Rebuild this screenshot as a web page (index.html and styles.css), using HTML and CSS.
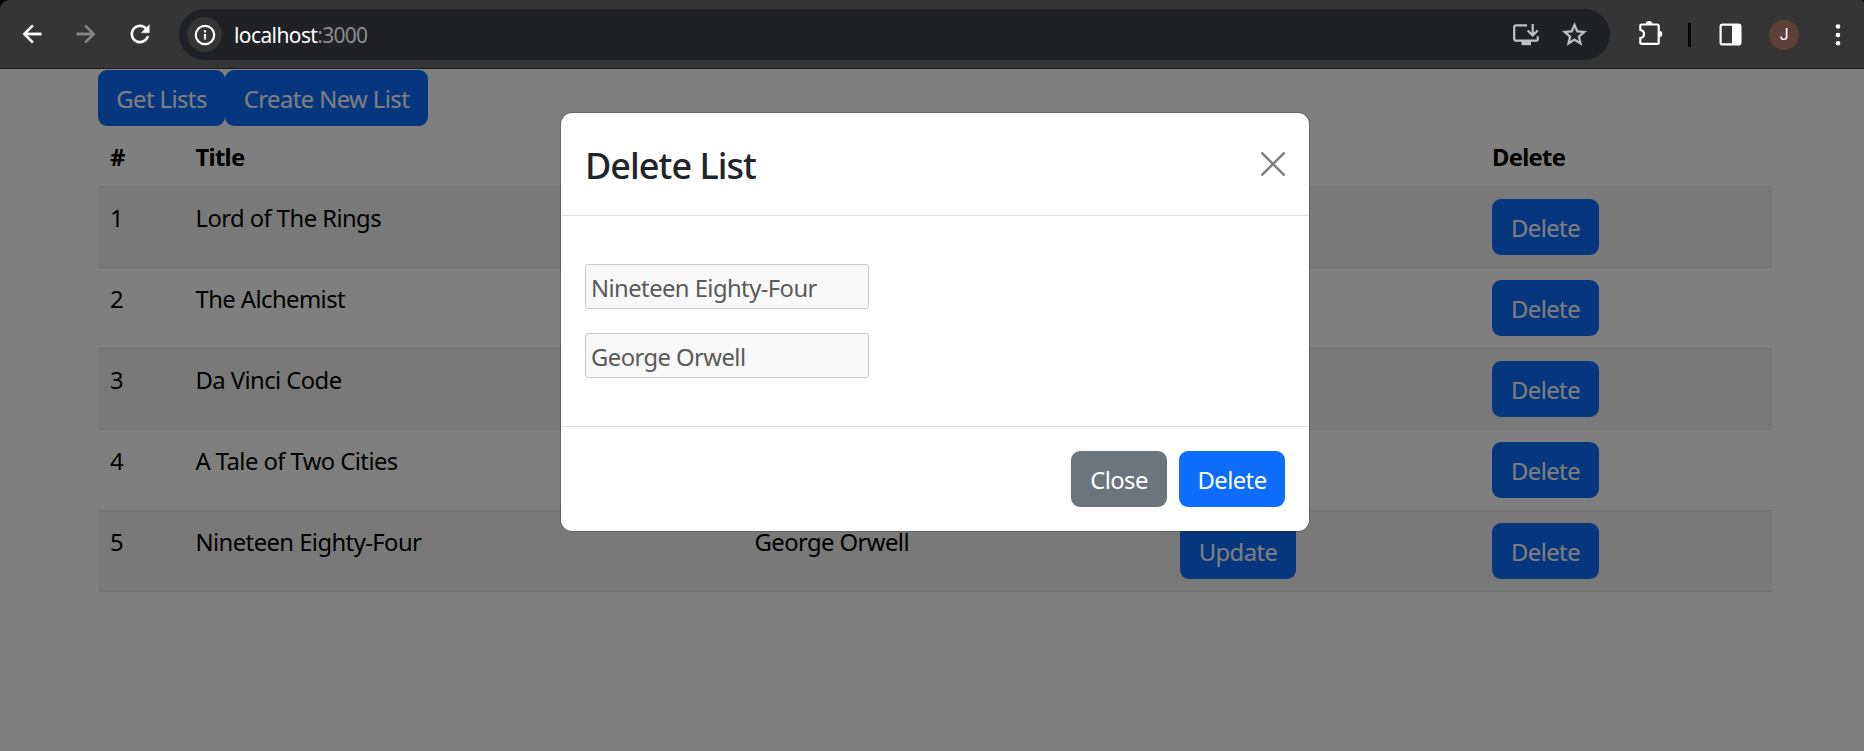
FILE: index.html
```
<!DOCTYPE html>
<html lang="en">
<head>
<meta charset="utf-8">
<title>localhost:3000</title>
<link rel="stylesheet" href="styles.css">
</head>
<body>
<header class="browser-bar">
  <nav class="nav-icons">
    <svg class="nav-icon" viewBox="0 0 24 24"><path d="M20 11H7.83l5.59-5.59L12 4l-8 8 8 8 1.41-1.41L7.83 13H20v-2z"/></svg>
    <svg class="nav-icon dim" viewBox="0 0 24 24"><path d="M12 4l-1.41 1.41L16.17 11H4v2h12.17l-5.58 5.59L12 20l8-8z"/></svg>
    <svg class="nav-icon reload" viewBox="0 0 24 24"><path d="M17.65 6.35C16.2 4.9 14.21 4 12 4c-4.42 0-7.99 3.58-7.99 8s3.57 8 7.99 8c3.73 0 6.84-2.55 7.73-6h-2.08c-.82 2.33-3.04 4-5.65 4-3.31 0-6-2.69-6-6s2.69-6 6-6c1.66 0 3.14.69 4.22 1.78L13 11h7V4l-2.35 2.35z"/></svg>
  </nav>
  <div class="omnibox">
    <span class="site-info"><svg width="22" height="22" viewBox="0 0 22 22" fill="none" stroke="#fff" stroke-width="2.2"><circle cx="11" cy="11" r="9.2"/><path d="M11 10v5.5M11 6.2v2.200"/></svg></span>
    <span class="url"><span class="host">localhost</span><span class="port">:3000</span></span>
    <svg class="install" width="26" height="24" viewBox="0 0 26 24" fill="none" stroke="#c2c2c2" stroke-width="2.2"><path d="M14 2.3H3.2a2 2 0 0 0-2 2v11.4a2 2 0 0 0 2 2h20a1.600 1.600 0 0 0 1.600-1.600v-2.800M19.700 1v11M14.700 7.500l5 5 5-5"/><path d="M8.500 18h9.500v4.200H8.500z" fill="#c2c2c2" stroke="none"/></svg>
    <svg class="star" width="29" height="29" viewBox="0 0 24 24"><path fill="#c2c2c2" stroke="#c2c2c2" stroke-width=".3" d="M22 9.24l-7.19-.62L12 2 9.19 8.63 2 9.24l5.46 4.73L5.82 21 12 17.27 18.18 21l-1.63-7.03L22 9.24zM12 15.4l-3.76 2.27 1-4.28-3.32-2.88 4.38-.38L12 6.1l1.71 4.04 4.38.38-3.32 2.88 1 4.28L12 15.4z"/></svg>
  </div>
  <div class="tools">
    <svg width="26" height="26" viewBox="0 0 26 26"><path d="M4.500 4.500h16a1.200 1.200 0 0 1 1.200 1.200v17a1.200 1.200 0 0 1-1.200 1.200h-16a1.200 1.200 0 0 1-1.200-1.200v-4.500c2.600-.5 3.700-2 3.700-4.200s-1.100-3.700-3.700-4.200V5.700a1.200 1.200 0 0 1 1.200-1.200z" fill="none" stroke="#fff" stroke-width="2.200"/><path d="M8.800 4a3.300 3 0 0 1 6.600 0zM22 10.700a3.300 3.300 0 0 1 0 6.600z" fill="#fff"/></svg>
    <span class="separator"></span>
    <svg class="panel" width="23" height="23" viewBox="0 0 23 23"><rect x="1.600" y="1.600" width="19.800" height="19.800" rx="2" fill="none" stroke="#fff" stroke-width="2.200"/><path d="M13 1h8l1 1v19l-1 1h-8z" fill="#fff"/></svg>
    <span class="avatar">J</span>
    <svg class="dots" width="6" height="24" viewBox="0 0 6 24" fill="#fff"><circle cx="3" cy="3.500" r="2.300"/><circle cx="3" cy="12" r="2.300"/><circle cx="3" cy="20.300" r="2.300"/></svg>
  </div>
</header>
<div class="viewport">
<main class="page">
  <div class="actions"><button class="btn w-get">Get Lists</button><button class="btn w-create">Create New List</button></div>
  <table class="lists">
    <colgroup><col class="c1"><col class="c2"><col class="c3"><col class="c4"><col class="c5"></colgroup>
    <thead><tr><th>#</th><th>Title</th><th></th><th></th><th>Delete</th></tr></thead>
    <tbody>
      <tr><td>1</td><td>Lord of The Rings</td><td></td><td></td><td><button class="btn w-delete">Delete</button></td></tr>
      <tr><td>2</td><td>The Alchemist</td><td></td><td></td><td><button class="btn w-delete">Delete</button></td></tr>
      <tr><td>3</td><td>Da Vinci Code</td><td></td><td></td><td><button class="btn w-delete">Delete</button></td></tr>
      <tr><td>4</td><td>A Tale of Two Cities</td><td></td><td></td><td><button class="btn w-delete">Delete</button></td></tr>
      <tr><td>5</td><td>Nineteen Eighty-Four</td><td>George Orwell</td><td><button class="btn w-update">Update</button></td><td><button class="btn w-delete">Delete</button></td></tr>
    </tbody>
  </table>
</main>
<div class="backdrop">
  <section class="modal">
    <div class="modal-header"><h1 class="modal-title">Delete List</h1>
      <svg class="close" width="24" height="24" viewBox="0 0 24 24"><path d="M1.300 1.300l21.400 21.400M22.700 1.300L1.300 22.700" stroke="#7f7f7f" stroke-width="2.600" stroke-linecap="round"/></svg></div>
    <div class="modal-body">
      <div class="field">Nineteen Eighty-Four</div>
      <div class="field">George Orwell</div>
    </div>
    <div class="modal-footer"><button class="btn secondary w-close">Close</button><button class="btn w-confirm">Delete</button></div>
  </section>
</div>
</div>
</body>
</html>
```
FILE: styles.css
```
* { box-sizing: border-box; }
body {
  margin: 0;
  height: 751px;
  overflow: hidden;
  display: flex;
  flex-direction: column;
  background: #000;
  font: 400 23.8px/36px "Segoe UI", "Noto Sans", sans-serif;
  letter-spacing: -0.56px;
  color: #000;
}
svg { display: block; flex: none; }

.browser-bar {
  height: 69px;
  flex: none;
  display: flex;
  padding-top: 9px;
  background: #353535;
  border-bottom: 1px solid #1e1e1e;
  border-radius: 9px 3px 0 0;
}
.nav-icons { display: flex; width: 179px; padding: 11px 0 0 18px; gap: 27px; }
.nav-icon { width: 28px; height: 28px; fill: #fff; stroke: #fff; stroke-width: .3; }
.nav-icon.dim { fill: #888; stroke: #888; margin-left: -1px; }
.nav-icon.reload { margin-left: -1px; }
.omnibox {
  width: 1431px;
  height: 51px;
  display: flex;
  align-items: center;
  padding: 0 21px 0 8px;
  border-radius: 26px;
  background: #202124;
}
.site-info {
  width: 35px;
  height: 35px;
  display: grid;
  place-items: center;
  border-radius: 50%;
  background: #353535;
}
.url { flex: 1; margin-left: 12px; font-size: 21px; letter-spacing: -0.6px; }
.host { color: #fff; }
.port { color: #8c8d8f; letter-spacing: -0.75px; }
.install { margin-right: 21px; }
.tools { display: flex; align-items: center; height: 51px; }
.tools > svg:first-child { margin: -3px 0 0 27px; }
.separator { width: 3px; height: 24px; margin-left: 25px; background: #000; border-radius: 1px; }
.panel { margin-left: 28px; }
.avatar {
  width: 30px;
  height: 30px;
  margin-left: 27px;
  border-radius: 50%;
  background: #5d4037;
  color: #fff;
  font: 16px/30px Roboto, sans-serif;
  text-align: center;
}
.dots { margin-left: 36px; }

.viewport { position: relative; flex: 1; background: #fff; }
.page { width: 1674px; margin-left: 98px; padding-top: 1px; }
.actions { display: flex; }
.btn {
  height: 56px;
  padding: 2px 0 0;
  border: 0;
  border-radius: 9px;
  background: #0d6efd;
  color: #fff;
  font: inherit;
  letter-spacing: inherit;
  display: block;
}
.btn.secondary { background: #6c757d; }
.w-get { width: 127px; }
.w-create { width: 203px; }
.w-update { width: 116px; }
.w-delete { width: 107px; }
.w-confirm { width: 106px; }
.w-close { width: 96px; }

.lists { width: 1674px; table-layout: fixed; border-collapse: separate; border-spacing: 0; }
.c1 { width: 85.500px; }
.c2 { width: 559px; }
.c3 { width: 425.500px; }
.c4 { width: 312px; }
.c5 { width: 292px; }
.lists th, .lists td {
  padding: 13px 12px 11px;
  border-bottom: 1px solid #dee2e6;
  text-align: left;
  vertical-align: top;
}
.lists td:has(.btn) { padding: 12px; }
.lists td { height: 81px; }
.lists th { height: 61px; font-weight: 700; letter-spacing: -0.7px; }
.lists tbody tr:nth-child(odd) td { background: #f2f2f2; }

.backdrop { position: absolute; inset: 0; background: rgba(0, 0, 0, .5); }
.modal {
  width: 750px;
  margin: 43px 0 0 560px;
  border: 1px solid rgba(0, 0, 0, .18);
  border-radius: 12px;
  background: #fff;
  background-clip: padding-box;
  color: #212529;
}
.modal-header {
  height: 103px;
  display: flex;
  justify-content: space-between;
  align-items: center;
  padding: 0 24px;
  border-bottom: 1px solid #dee2e6;
}
.modal-title { margin: 4px 0 0; font-size: 36px; line-height: 54px; font-weight: 500; letter-spacing: -0.95px; }
.modal-body { height: 210px; padding: 48px 24px 0; }
.field {
  width: 284px;
  height: 45px;
  margin-bottom: 24px;
  padding: 5px 0 0 5px;
  border: 1px solid #cbcbcb;
  border-radius: 3px;
  background: #f8f8f8;
  color: #5a5a5a;
}
.modal-footer {
  height: 105px;
  display: flex;
  justify-content: flex-end;
  gap: 12px;
  padding: 24px;
  border-top: 1px solid #dee2e6;
}
```
